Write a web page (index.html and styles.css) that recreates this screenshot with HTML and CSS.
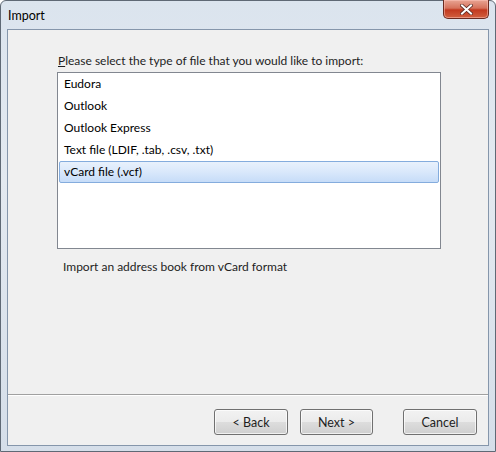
FILE: index.html
```html
<!DOCTYPE html>
<html lang="en">
<head>
    <meta charset="UTF-8">
    <title>Import</title>
    <link rel="stylesheet" href="styles.css">
</head>
<body>
    <div class="window">
        <div class="titlebar">
            <span class="title">Import</span>
            <button class="close-btn" title="Close">
                <svg width="13" height="11" viewBox="0 0 13 11">
                    <path d="M2 1.5 L11 9.5 M11 1.5 L2 9.5" stroke="#5a2a22" stroke-width="3.6" stroke-linecap="square"/>
                    <path d="M2 1.5 L11 9.5 M11 1.5 L2 9.5" stroke="#ffffff" stroke-width="2" stroke-linecap="square"/>
                </svg>
            </button>
        </div>

        <div class="client">
            <div class="page">
                <p class="prompt"><u>P</u>lease select the type of file that you would like to import:</p>
                <ul class="listbox">
                    <li>Eudora</li>
                    <li>Outlook</li>
                    <li>Outlook Express</li>
                    <li>Text file (LDIF, .tab, .csv, .txt)</li>
                    <li class="selected">vCard file (.vcf)</li>
                </ul>
                <p class="description">Import an address book from vCard format</p>
            </div>

            <div class="separator"></div>

            <div class="button-row">
                <button class="btn">&lt; Back</button>
                <button class="btn next">Next &gt;</button>
                <button class="btn cancel">Cancel</button>
            </div>
        </div>
    </div>
</body>
</html>
```

FILE: styles.css
```css
body {
    margin: 0;
    padding: 0;
    background: #ffffff;
    font-family: Lato, "Open Sans", Arial, sans-serif;
    font-size: 12px;
    color: #000;
}

.window {
    width: 496px;
    height: 452px;
    box-sizing: border-box;
    border: 1px solid #5f6975;
    border-radius: 6px 6px 0 0;
    background: linear-gradient(to bottom, #dbe4ee 0%, #e3e9f0 40%, #d5dee9 100%);
    display: flex;
    flex-direction: column;
}

.titlebar {
    height: 28px;
    display: flex;
    justify-content: space-between;
    align-items: flex-start;
}

.title {
    margin: 7px 0 0 7px;
    color: #000;
    font-size: 12.5px;
}

.close-btn {
    width: 46px;
    height: 19px;
    margin: -1px 6px 0 0;
    padding: 0;
    border: 1px solid #6a2a20;
    border-top: none;
    border-radius: 0 0 5px 5px;
    background: linear-gradient(to bottom, #e8a493 0%, #d6725c 45%, #c2391f 55%, #d1603f 100%);
    box-shadow: inset 0 0 0 1px rgba(255, 200, 190, 0.5);
    display: flex;
    justify-content: center;
    align-items: center;
}

.client {
    flex: 1;
    margin: 0 6px 5px 6px;
    border: 1px solid #8596ab;
    background: #f0f0f0;
    display: flex;
    flex-direction: column;
}

.page {
    flex: 1;
    padding: 23px 0 0 49px;
}

.prompt {
    margin: 0 0 3px 1px;
    line-height: 16px;
    color: #1e1e1e;
}

.listbox {
    list-style: none;
    margin: 0;
    padding: 0 1px;
    width: 380px;
    height: 175px;
    border: 1px solid #828790;
    background: #fff;
}

.listbox li {
    height: 22px;
    line-height: 22px;
    padding-left: 5px;
    box-sizing: border-box;
}

.listbox li.selected {
    padding-left: 4px;
    border: 1px solid #84acdd;
    border-radius: 2px;
    line-height: 20px;
    background: linear-gradient(to bottom, #e8f1fc 0%, #d9e8fb 50%, #c6dcf8 100%);
}

.description {
    margin: 10px 0 0 6px;
    line-height: 16px;
    color: #1e1e1e;
}

.separator {
    height: 1px;
    background: #a0a0a0;
    border-bottom: 1px solid #ffffff;
}

.button-row {
    height: 49px;
    display: flex;
    justify-content: flex-end;
    align-items: flex-start;
    padding: 13px 11px 0 0;
    box-sizing: border-box;
}

.btn {
    width: 74px;
    height: 26px;
    padding: 0;
    font-family: inherit;
    font-size: 12.5px;
    color: #1e1e1e;
    border: 1px solid #707070;
    border-radius: 3px;
    background: linear-gradient(to bottom, #f2f2f2 0%, #ebebeb 50%, #dddddd 51%, #cfcfcf 100%);
    box-shadow: inset 0 0 0 1px rgba(255, 255, 255, 0.7);
}

.btn.next {
    width: 73px;
    margin-left: 12px;
}

.btn.cancel {
    margin-left: 30px;
}
```
